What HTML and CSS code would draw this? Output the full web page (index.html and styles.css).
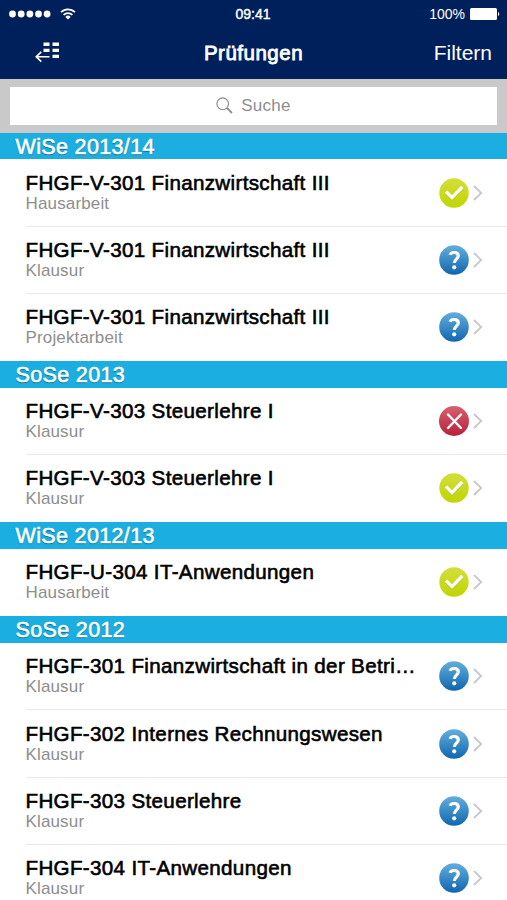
FILE: index.html
```html
<!DOCTYPE html>
<html lang="de">
<head>
    <meta charset="UTF-8">
    <meta name="viewport" content="width=device-width, initial-scale=1.0">
    <title>Prüfungen</title>
    <link rel="stylesheet" href="styles.css">
</head>
<body>

<!-- shared icons -->
<svg class="defs" width="0" height="0">
    <defs>
        <linearGradient id="green" x1="0" y1="0" x2="0" y2="1">
            <stop offset="0" stop-color="#d3de3c"/>
            <stop offset="1" stop-color="#bfd600"/>
        </linearGradient>
        <linearGradient id="blue" x1="0" y1="0" x2="0" y2="1">
            <stop offset="0" stop-color="#64aede"/>
            <stop offset="1" stop-color="#0f66ae"/>
        </linearGradient>
        <linearGradient id="red" x1="0" y1="0" x2="0" y2="1">
            <stop offset="0" stop-color="#d5626f"/>
            <stop offset="1" stop-color="#b8203a"/>
        </linearGradient>
        <symbol id="ok" viewBox="0 0 30 30">
            <circle cx="15" cy="15" r="14.7" fill="url(#green)"/>
            <path d="M7 13.600l6 6L23.300 9" fill="none" stroke="#8f9d20" stroke-opacity=".4" stroke-width="3.400" transform="translate(0 1)"/>
            <path d="M7 13.600l6 6L23.300 9" fill="none" stroke="#fff" stroke-width="3.400"/>
        </symbol>
        <symbol id="open" viewBox="0 0 30 30">
            <circle cx="15" cy="15" r="14.8" fill="url(#blue)"/>
            <path d="M11 9.800c.6-1.600 2.100-2.300 4-2.300 2.600 0 4.300 1.200 4.300 3.300 0 3.200-4 3.400-4 7.200" fill="none" stroke="#fff" stroke-width="3.200"/>
            <circle cx="15.200" cy="22.300" r="2.100" fill="#fff"/>
        </symbol>
        <symbol id="fail" viewBox="0 0 30 30">
            <circle cx="15" cy="15" r="15" fill="url(#red)"/>
            <path d="M9 8.500l13 13.500M22 8.500L9 22" fill="none" stroke="#fff" stroke-width="2.400" stroke-linecap="round"/>
        </symbol>
        <symbol id="arrow" viewBox="0 0 10 16">
            <path d="M1 1l7.200 7L1 15" fill="none" stroke="#c8c8cc" stroke-width="1.800"/>
        </symbol>
    </defs>
</svg>

<div class="header">
    <div class="status">
        <div class="signal">
            <svg width="42" height="8" viewBox="0 0 42 8" fill="#fff">
                <circle cx="3.500" cy="4" r="3.400"/>
                <circle cx="12.200" cy="4" r="3.400"/>
                <circle cx="20.900" cy="4" r="3.400"/>
                <circle cx="29.500" cy="4" r="3.400"/>
                <circle cx="38.100" cy="4" r="3.400"/>
            </svg>
            <svg width="16" height="12" viewBox="0 0 16 12" fill="none" stroke="#fff" stroke-width="1.700">
                <path d="M1 4.200a10 10 0 0 1 14 0M3.600 6.900a6.200 6.200 0 0 1 8.800 0"/>
                <path d="M5.400 8.900a3.700 3.700 0 0 1 5.200 0L8 11.500z" fill="#fff" stroke="none"/>
            </svg>
        </div>
        <span class="time">09:41</span>
        <div class="battery">
            <span>100%</span>
            <svg width="30" height="12" viewBox="0 0 30 12" fill="#fff">
                <rect x="0" y="0" width="27" height="12" rx="1.500"/>
                <path d="M28 4a2.200 2.200 0 0 1 0 4z"/>
            </svg>
        </div>
    </div>
    <div class="nav">
        <svg class="back" width="25" height="21" viewBox="0 0 25 21">
            <path d="M8.500 .5h6v3.400h-6zM17.500 .5h6.500v3.400h-6.500zM8.500 6.800h6v3.200h-6zM17.500 6.800h6.500v3.200h-6.500zM17.500 12.800h6.500v3.300h-6.500z" fill="#fff"/>
            <path d="M14.500 14.700H1.200M6.300 9.800L1.200 14.700l5.100 4.900" fill="none" stroke="#fff" stroke-width="1.600"/>
        </svg>
        <h1>Prüfungen</h1>
        <span class="filter">Filtern</span>
    </div>
</div>

<div class="search">
    <div class="search_box">
        <svg width="17" height="17" viewBox="0 0 17 17" fill="none" stroke="#8e8e93">
            <circle cx="6.700" cy="6.700" r="5.800" stroke-width="1.200"/>
            <path d="M11 11l5 5" stroke-width="1.800"/>
        </svg>
        <span>Suche</span>
    </div>
</div>

<div class="list">
    <h2>WiSe 2013/14</h2>
    <div class="row">
        <div class="text"><h3>FHGF-V-301 Finanzwirtschaft III</h3><p>Hausarbeit</p></div>
        <svg class="state"><use href="#ok"/></svg><svg class="arrow"><use href="#arrow"/></svg>
    </div>
    <div class="row">
        <div class="text"><h3>FHGF-V-301 Finanzwirtschaft III</h3><p>Klausur</p></div>
        <svg class="state"><use href="#open"/></svg><svg class="arrow"><use href="#arrow"/></svg>
    </div>
    <div class="row">
        <div class="text"><h3>FHGF-V-301 Finanzwirtschaft III</h3><p>Projektarbeit</p></div>
        <svg class="state"><use href="#open"/></svg><svg class="arrow"><use href="#arrow"/></svg>
    </div>

    <h2>SoSe 2013</h2>
    <div class="row">
        <div class="text"><h3>FHGF-V-303 Steuerlehre I</h3><p>Klausur</p></div>
        <svg class="state"><use href="#fail"/></svg><svg class="arrow"><use href="#arrow"/></svg>
    </div>
    <div class="row">
        <div class="text"><h3>FHGF-V-303 Steuerlehre I</h3><p>Klausur</p></div>
        <svg class="state"><use href="#ok"/></svg><svg class="arrow"><use href="#arrow"/></svg>
    </div>

    <h2>WiSe 2012/13</h2>
    <div class="row">
        <div class="text"><h3>FHGF-U-304 IT-Anwendungen</h3><p>Hausarbeit</p></div>
        <svg class="state"><use href="#ok"/></svg><svg class="arrow"><use href="#arrow"/></svg>
    </div>

    <h2>SoSe 2012</h2>
    <div class="row">
        <div class="text"><h3>FHGF-301 Finanzwirtschaft in der Betri…</h3><p>Klausur</p></div>
        <svg class="state"><use href="#open"/></svg><svg class="arrow"><use href="#arrow"/></svg>
    </div>
    <div class="row">
        <div class="text"><h3>FHGF-302 Internes Rechnungswesen</h3><p>Klausur</p></div>
        <svg class="state"><use href="#open"/></svg><svg class="arrow"><use href="#arrow"/></svg>
    </div>
    <div class="row">
        <div class="text"><h3>FHGF-303 Steuerlehre</h3><p>Klausur</p></div>
        <svg class="state"><use href="#open"/></svg><svg class="arrow"><use href="#arrow"/></svg>
    </div>
    <div class="row">
        <div class="text"><h3>FHGF-304 IT-Anwendungen</h3><p>Klausur</p></div>
        <svg class="state"><use href="#open"/></svg><svg class="arrow"><use href="#arrow"/></svg>
    </div>
</div>

</body>
</html>
```
FILE: styles.css
```css
* {
    box-sizing: border-box;
}

body {
    margin: 0;
    height: 900px;
    overflow: hidden;
    background: #fff;
    font-family: "Liberation Sans", Arial, sans-serif;
    display: flex;
    flex-direction: column;
}

h1, h2, h3, p {
    margin: 0;
    font-weight: normal;
    white-space: nowrap;
}

svg {
    flex: none;
    display: block;
}

.defs {
    height: 0;
}

/* top bar */
.header {
    flex: none;
    height: 79px;
    background: #00205c;
    color: #fff;
}

.status {
    display: grid;
    grid-template-columns: 1fr auto 1fr;
    align-items: center;
    height: 27px;
    padding: 0 7px 0 9px;
    font-size: 14px;
}

.signal {
    display: flex;
    align-items: center;
    gap: 9px;
}

.time {
    margin-right: 3px;
    -webkit-text-stroke: 0.4px #fff;
}

.battery {
    display: flex;
    align-items: center;
    justify-content: flex-end;
    gap: 5px;
}

.nav {
    display: grid;
    grid-template-columns: 1fr auto 1fr;
    align-items: center;
    height: 52px;
    padding: 0 15px;
}

.back {
    margin: -2px 0 0 20px;
}

.nav h1 {
    font-size: 20.5px;
    line-height: 24px;
    letter-spacing: 0.5px;
    -webkit-text-stroke: 0.8px #fff;
}

.filter {
    font-size: 21px;
    text-align: right;
}

/* search */
.search {
    flex: none;
    height: 53.6px;
    padding: 8px 10px;
    background: #c8c9c8;
}

.search_box {
    display: flex;
    align-items: center;
    justify-content: center;
    gap: 8px;
    height: 37.5px;
    background: #fff;
    color: #8e8e93;
    font-size: 17px;
    letter-spacing: 0.3px;
}

/* list */
.list {
    flex: none;
}

.list h2 {
    height: 26.9px;
    padding-left: 15.5px;
    background: #1baee1;
    color: #fff;
    font-size: 21.5px;
    line-height: 28px;
    letter-spacing: 0.35px;
    -webkit-text-stroke: 0.6px #fff;
    text-shadow: 0 1px 1px rgba(0, 0, 0, 0.5);
}

.row {
    display: flex;
    align-items: center;
    height: 67.2px;
    margin-left: 26px;
    padding-right: 24px;
    border-bottom: 1px solid #e8e8e8;
}

.row:has(+ h2) {
    border-bottom-color: transparent;
}

.text {
    flex: 1;
    min-width: 0;
}

.row h3 {
    margin-left: -0.5px;
    font-size: 20.6px;
    line-height: 22px;
    letter-spacing: 0.33px;
    color: #000;
    -webkit-text-stroke: 0.6px #000;
}

.row p {
    margin-left: -0.5px;
    font-size: 17px;
    line-height: 19px;
    letter-spacing: 0.15px;
    color: #8e8e8e;
}

.text {
    margin-top: -1px;
}

.state {
    width: 30px;
    height: 30px;
}

.arrow {
    width: 10px;
    height: 16px;
    margin-left: 4px;
}
```
